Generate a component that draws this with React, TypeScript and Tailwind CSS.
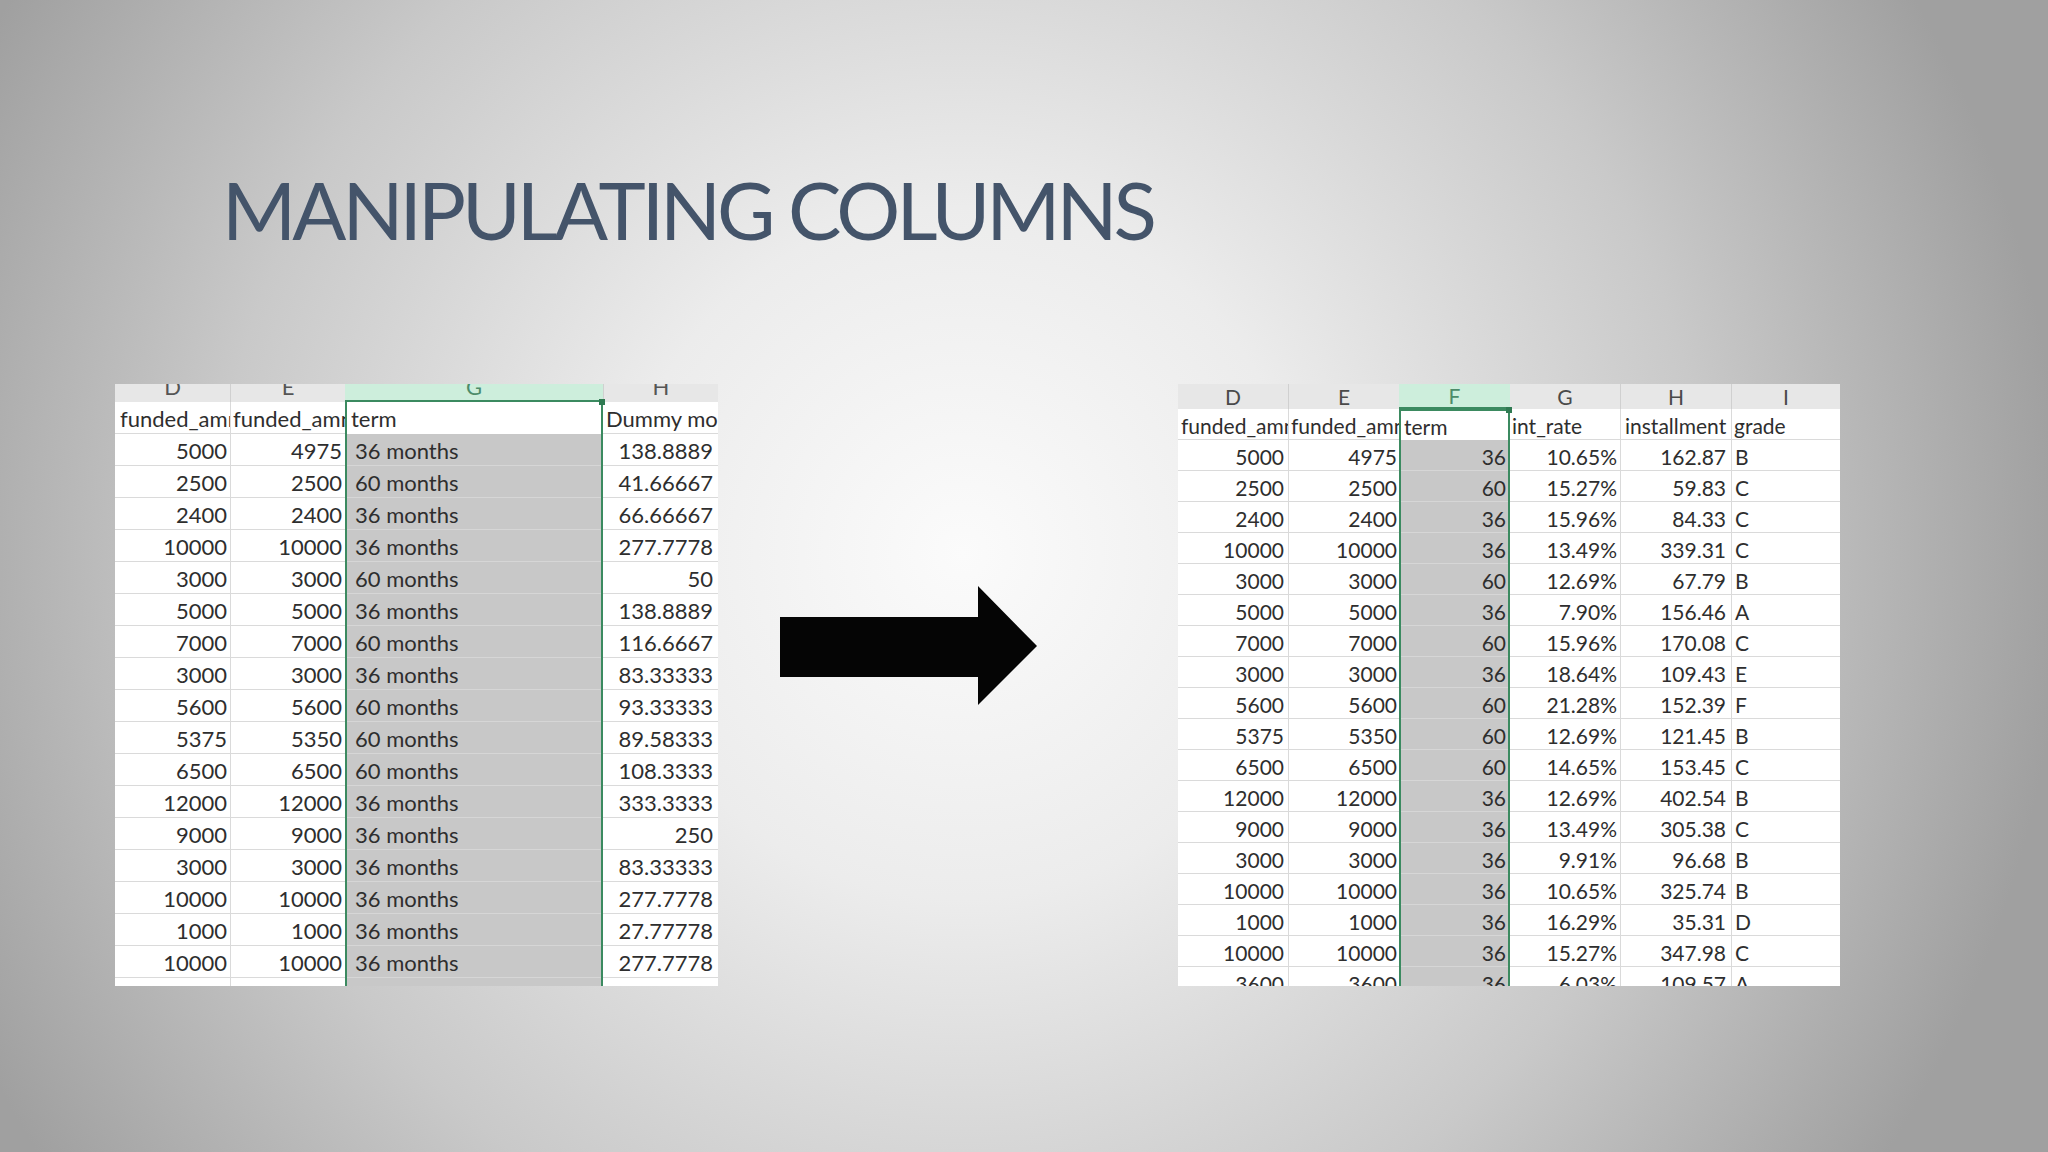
import React from "react";

const leftRows: [string, string, string, string][] = [
  ["5000", "4975", "36 months", "138.8889"],
  ["2500", "2500", "60 months", "41.66667"],
  ["2400", "2400", "36 months", "66.66667"],
  ["10000", "10000", "36 months", "277.7778"],
  ["3000", "3000", "60 months", "50"],
  ["5000", "5000", "36 months", "138.8889"],
  ["7000", "7000", "60 months", "116.6667"],
  ["3000", "3000", "36 months", "83.33333"],
  ["5600", "5600", "60 months", "93.33333"],
  ["5375", "5350", "60 months", "89.58333"],
  ["6500", "6500", "60 months", "108.3333"],
  ["12000", "12000", "36 months", "333.3333"],
  ["9000", "9000", "36 months", "250"],
  ["3000", "3000", "36 months", "83.33333"],
  ["10000", "10000", "36 months", "277.7778"],
  ["1000", "1000", "36 months", "27.77778"],
  ["10000", "10000", "36 months", "277.7778"],
  ["", "", "", ""],
];

const rightRows: [string, string, string, string, string, string][] = [
  ["5000", "4975", "36", "10.65%", "162.87", "B"],
  ["2500", "2500", "60", "15.27%", "59.83", "C"],
  ["2400", "2400", "36", "15.96%", "84.33", "C"],
  ["10000", "10000", "36", "13.49%", "339.31", "C"],
  ["3000", "3000", "60", "12.69%", "67.79", "B"],
  ["5000", "5000", "36", "7.90%", "156.46", "A"],
  ["7000", "7000", "60", "15.96%", "170.08", "C"],
  ["3000", "3000", "36", "18.64%", "109.43", "E"],
  ["5600", "5600", "60", "21.28%", "152.39", "F"],
  ["5375", "5350", "60", "12.69%", "121.45", "B"],
  ["6500", "6500", "60", "14.65%", "153.45", "C"],
  ["12000", "12000", "36", "12.69%", "402.54", "B"],
  ["9000", "9000", "36", "13.49%", "305.38", "C"],
  ["3000", "3000", "36", "9.91%", "96.68", "B"],
  ["10000", "10000", "36", "10.65%", "325.74", "B"],
  ["1000", "1000", "36", "16.29%", "35.31", "D"],
  ["10000", "10000", "36", "15.27%", "347.98", "C"],
  ["3600", "3600", "36", "6.03%", "109.57", "A"],
];

function LeftTable() {
  return (
    <div className="w-[603px] h-[602px] shrink-0 overflow-hidden bg-white text-[22px] text-[#2e2e2e]">
      {/* column letters, clipped at the top like the screenshot */}
      <div className="flex h-[18px] bg-[#e7e7e7] text-[#555]">
        <div className="w-[116px] h-full overflow-hidden border-r border-[#d0d0d0] flex items-end justify-center pb-[4px]">
          <span className="leading-[22px]">D</span>
        </div>
        <div className="w-[114px] h-full overflow-hidden flex items-end justify-center pb-[4px]">
          <span className="leading-[22px]">E</span>
        </div>
        <div className="w-[258px] h-full overflow-hidden bg-[#cdeedc] border-b-2 border-[#3b8a60] flex items-end justify-center pb-[2px] text-[#4c8c6a]">
          <span className="leading-[22px]">G</span>
        </div>
        <div className="w-[115px] h-full overflow-hidden border-l border-[#d0d0d0] flex items-end justify-center pb-[4px]">
          <span className="leading-[22px]">H</span>
        </div>
      </div>

      {/* field names */}
      <div className="flex h-[32px] leading-none">
        <div className="w-[116px] h-full overflow-hidden whitespace-nowrap border-r border-b border-[#dadada] flex items-center pt-[2px] pl-[5px]">funded_amnt</div>
        <div className="w-[114px] h-full overflow-hidden whitespace-nowrap border-b border-[#dadada] flex items-center pt-[2px] pl-[2px]">funded_amnt_inv</div>
        <div className="relative w-[258px] h-full whitespace-nowrap border-x-2 border-[#3b8a60] bg-white flex items-center pt-[2px] pl-[4px]">
          term
          <div className="absolute -right-[4px] -top-[3px] w-[6px] h-[6px] bg-[#2f7a52]" />
        </div>
        <div className="w-[115px] h-full overflow-hidden whitespace-nowrap border-b border-[#dadada] flex items-center pt-[2px] pl-[3px]">Dummy monthly</div>
      </div>

      {leftRows.map((r, i) => (
        <div key={i} className="flex h-[32px] leading-none">
          <div className="w-[116px] h-full border-r border-b border-[#dadada] flex items-center justify-end pt-[3px] pr-[3px]">{r[0]}</div>
          <div className="w-[114px] h-full border-b border-[#dadada] flex items-center justify-end pt-[3px] pr-[3px]">{r[1]}</div>
          <div className="w-[258px] h-full border-x-2 border-[#3b8a60] bg-[#c8c8c8] flex flex-col">
            <div className="flex-1 flex items-center pt-[3px] pl-[8px]">{r[2]}</div>
            <div className="h-px bg-[#d6d6d6]" />
          </div>
          <div className="w-[115px] h-full border-b border-[#dadada] flex items-center justify-end pt-[3px] pr-[5px]">{r[3]}</div>
        </div>
      ))}
    </div>
  );
}

function RightTable() {
  return (
    <div className="w-[662px] h-[602px] shrink-0 overflow-hidden bg-white text-[21px] text-[#2e2e2e]">
      <div className="flex h-[25px] bg-[#e7e7e7] text-[#4a4a4a] leading-none">
        <div className="w-[111px] h-full border-r border-[#d0d0d0] flex items-center justify-center">D</div>
        <div className="w-[110px] h-full flex items-center justify-center">E</div>
        <div className="w-[111px] h-full bg-[#cdeedc] border-b-2 border-[#3b8a60] flex items-center justify-center text-[#4c8c6a]">F</div>
        <div className="w-[111px] h-full border-r border-[#d0d0d0] flex items-center justify-center">G</div>
        <div className="w-[111px] h-full border-r border-[#d0d0d0] flex items-center justify-center">H</div>
        <div className="w-[108px] h-full flex items-center justify-center">I</div>
      </div>

      <div className="flex h-[31px] leading-none">
        <div className="w-[111px] h-full overflow-hidden whitespace-nowrap border-r border-b border-[#dadada] flex items-center pt-[2px] pl-[3px]">funded_amnt</div>
        <div className="w-[110px] h-full overflow-hidden whitespace-nowrap border-b border-[#dadada] flex items-center pt-[2px] pl-[2px]">funded_amnt_inv</div>
        <div className="relative w-[111px] h-full whitespace-nowrap border-x-2 border-t-2 border-[#3b8a60] bg-white flex items-center pt-[2px] pl-[3px]">
          term
          <div className="absolute -right-[4px] -top-[4px] w-[6px] h-[6px] bg-[#2f7a52]" />
        </div>
        <div className="w-[111px] h-full overflow-hidden whitespace-nowrap border-r border-b border-[#dadada] flex items-center pt-[2px] pl-[2px]">int_rate</div>
        <div className="w-[111px] h-full overflow-hidden whitespace-nowrap border-r border-b border-[#dadada] flex items-center pt-[2px] pl-[4px]">installment</div>
        <div className="w-[108px] h-full overflow-hidden whitespace-nowrap border-b border-[#dadada] flex items-center pt-[2px] pl-[2px]">grade</div>
      </div>

      {rightRows.map((r, i) => (
        <div key={i} className="flex h-[31px] leading-none">
          <div className="w-[111px] h-full border-r border-b border-[#dadada] flex items-center justify-end pt-[2px] pr-[4px]">{r[0]}</div>
          <div className="w-[110px] h-full border-b border-[#dadada] flex items-center justify-end pt-[2px] pr-[2px]">{r[1]}</div>
          <div className="w-[111px] h-full border-x-2 border-[#3b8a60] bg-[#c8c8c8] flex flex-col">
            <div className="flex-1 flex items-center justify-end pt-[2px] pr-[2px]">{r[2]}</div>
            <div className="h-px bg-[#d6d6d6]" />
          </div>
          <div className="w-[111px] h-full border-r border-b border-[#dadada] flex items-center justify-end pt-[2px] pr-[3px]">{r[3]}</div>
          <div className="w-[111px] h-full border-r border-b border-[#dadada] flex items-center justify-end pt-[2px] pr-[5px]">{r[4]}</div>
          <div className="w-[108px] h-full border-b border-[#dadada] flex items-center pt-[2px] pl-[3px]">{r[5]}</div>
        </div>
      ))}
    </div>
  );
}

function Arrow() {
  return (
    <svg width="258" height="119" viewBox="0 0 258 119" className="shrink-0">
      <polygon points="0,31 198,31 198,0 257,60 198,119 198,91 0,91" fill="#050505" />
    </svg>
  );
}

export default function App() {
  return (
    <div className="w-[2048px] h-[1152px] overflow-hidden [font-family:Lato,'Open_Sans',sans-serif] bg-[radial-gradient(ellipse_56%_100%_at_47%_48%,#fbfbfb_0%,#ececec_30%,#c9c9c9_65%,#a0a0a0_96%)]">
      <div className="h-[247px] pt-[169px] pl-[222px]">
        <h1 className="text-[80px] leading-none font-normal text-[#44546a] tracking-[-0.05em]">MANIPULATING COLUMNS</h1>
      </div>
      <div className="flex items-start pl-[115px] mt-[137px]">
        <LeftTable />
        <div className="ml-[62px] mt-[202px]">
          <Arrow />
        </div>
        <div className="ml-[140px]">
          <RightTable />
        </div>
      </div>
    </div>
  );
}
